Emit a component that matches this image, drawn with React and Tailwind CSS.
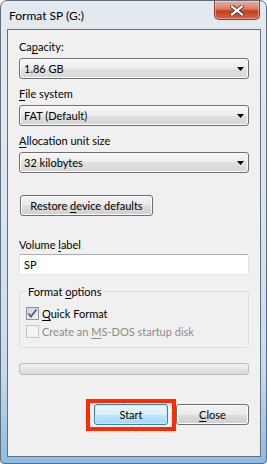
import { useState } from 'react'

const font = { fontFamily: 'Lato, "Noto Sans", "Liberation Sans", sans-serif' }

function Ul({ children }) {
  return <span className="underline underline-offset-[2px]">{children}</span>
}

function Combo({ value }) {
  return (
    <div className="flex h-[21px] items-center justify-between rounded-[3px] border border-[#707070] bg-[linear-gradient(#f6f6f6,#ececec_50%,#e1e1e1_50%,#d6d6d6)] pl-[4px] pr-[4px] shadow-[inset_0_0_0_1px_#fbfbfb]">
      <span>{value}</span>
      <svg width="7" height="4" viewBox="0 0 7 4">
        <path d="M0 0h7L3.5 4z" fill="#000" />
      </svg>
    </div>
  )
}

function Label({ children, className = '' }) {
  return <div className={`h-[15px] ${className}`}>{children}</div>
}

function CheckBox({ checked, disabled }) {
  return (
    <div
      className={`flex h-[13px] w-[13px] shrink-0 items-center justify-center border ${
        disabled ? 'border-[#c6c6c6] bg-[#f4f4f4]' : 'border-[#8e8f8f] bg-[linear-gradient(135deg,#cbcfd5,#f6f6f6)]'
      }`}
    >
      {checked && (
        <svg width="11" height="11" viewBox="0 0 11 11">
          <path d="M1.5 5.5 L4 8.5 L9.5 1.5" fill="none" stroke="#4a5f8f" strokeWidth="1.8" />
        </svg>
      )}
    </div>
  )
}

const btn =
  'flex h-[21px] items-center justify-center rounded-[3px] border border-[#707070] bg-[linear-gradient(#f2f2f2,#ebebeb_50%,#dddddd_50%,#cfcfcf)] shadow-[inset_0_0_0_1px_#fcfcfc]'

export default function App() {
  const [quick, setQuick] = useState(true)

  return (
    <div
      className="h-[464px] w-[267px] overflow-hidden rounded-t-[7px] rounded-b-[4px] border border-[#5f6d7c] bg-[linear-gradient(#e4e9ef,#dde6ef_40%,#c7dbee_80%,#8fbadf)] text-[11px] leading-[15px] text-black"
      style={font}
    >
      {/* Title bar */}
      <div className="flex h-[28px] items-start justify-between">
        <div className="pl-[8px] pt-[7px] text-[12px]">Format SP (G:)</div>
        <div className="mr-[6px] flex h-[19px] w-[46px] items-center justify-center rounded-b-[5px] border border-t-0 border-[#8a3c2c] bg-[linear-gradient(#eab0a1,#d87a62_45%,#c2401f_55%,#d7654a)] shadow-[inset_0_0_0_1px_rgba(255,255,255,0.35)]">
          <svg width="14" height="11" viewBox="0 0 14 11">
            <path d="M2 1.5 L12 9.5 M12 1.5 L2 9.5" stroke="#4a3a38" strokeWidth="4" strokeLinecap="square" />
            <path d="M2 1.5 L12 9.5 M12 1.5 L2 9.5" stroke="#fff" strokeWidth="2.2" strokeLinecap="square" />
          </svg>
        </div>
      </div>

      {/* Client area */}
      <div className="ml-[6px] h-[428px] w-[254px] border border-[#63727f] bg-[#f0f0f0] px-[11px] pt-[9px]">
        <Label>
          Ca<Ul>p</Ul>acity:
        </Label>
        <div className="mt-[4px]">
          <Combo value="1.86 GB" />
        </div>

        <Label className="mt-[7px]">
          <Ul>F</Ul>ile system
        </Label>
        <div className="mt-[4px]">
          <Combo value="FAT (Default)" />
        </div>

        <Label className="mt-[7px]">
          <Ul>A</Ul>llocation unit size
        </Label>
        <div className="mt-[4px]">
          <Combo value="32 kilobytes" />
        </div>

        <button className={`${btn} ml-px mt-[22px] w-[133px]`}>
          <span>
            Restore <Ul>d</Ul>evice defaults
          </span>
        </button>

        <Label className="mt-[21px]">
          Volume <Ul>l</Ul>abel
        </Label>
        <div className="mt-[2px] flex h-[21px] items-center rounded-[2px] border border-[#abadb3] border-l-[#e2e3ea] border-r-[#dbdfe6] border-b-[#e3e9ef] bg-white pl-[4px]">
          SP
        </div>

        {/* Format options */}
        <fieldset className="mt-[9px] h-[64px] rounded-[3px] border border-[#d5dfe5] px-[6px]">
          <legend className="px-[2px]">
            Format <Ul>o</Ul>ptions
          </legend>
          <label className="mt-[7px] flex h-[15px] items-center gap-[3px]" onClick={() => setQuick(!quick)}>
            <CheckBox checked={quick} />
            <span>
              <Ul>Q</Ul>uick Format
            </span>
          </label>
          <div className="mt-[3px] flex h-[15px] items-center gap-[3px] text-[#8d8d8d]">
            <CheckBox disabled />
            <span>
              Create an <Ul>M</Ul>S-DOS startup disk
            </span>
          </div>
        </fieldset>

        {/* Progress */}
        <div className="mt-[15px] h-[12px] rounded-[3px] border border-[#bcbcbc] bg-[linear-gradient(#f3f3f3,#e6e6e6_50%,#d9d9d9)]" />

        {/* Buttons */}
        <div className="mt-[29px] flex justify-end gap-[8px]">
          <div className="relative">
            <button className="flex h-[21px] w-[74px] items-center justify-center rounded-[3px] border border-[#3c7fb1] bg-[linear-gradient(#eaf6fd,#d9f0fc_50%,#bee6fd_50%,#a7d9f5)] shadow-[inset_0_0_0_1px_#c8eafd]">
              Start
            </button>
            <div className="pointer-events-none absolute left-[-8px] top-[-5px] h-[32px] w-[90px] border-4 border-[#fe2b00]" />
          </div>
          <button className={`${btn} w-[73px]`}>
            <span>
              <Ul>C</Ul>lose
            </span>
          </button>
        </div>
      </div>
    </div>
  )
}
